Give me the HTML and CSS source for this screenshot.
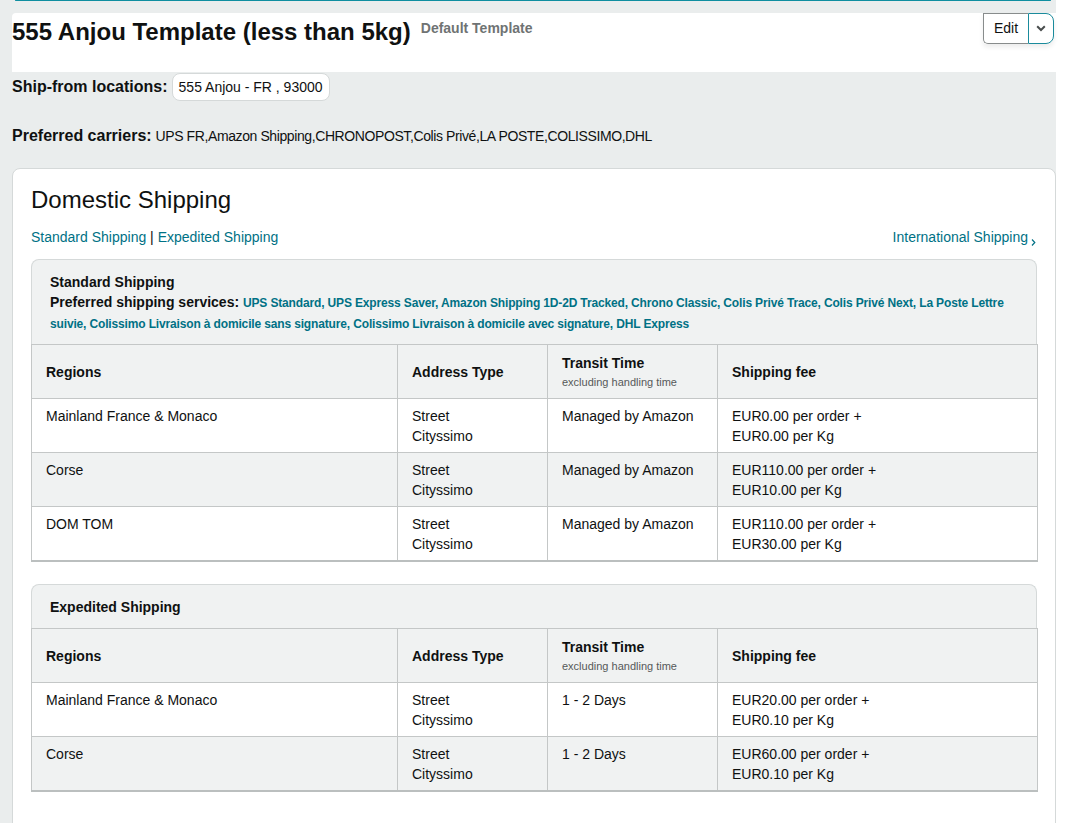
FILE: index.html
```html
<!DOCTYPE html>
<html lang="en">
<head>
<meta charset="utf-8">
<title>555 Anjou Template</title>
<link rel="stylesheet" href="styles.css">
</head>
<body>
<div class="page">
  <div class="topline"></div>
  <header class="head">
    <div class="title-wrap">
      <h1 class="title">555 Anjou Template (less than 5kg)</h1>
      <span class="default-tag">Default Template</span>
    </div>
    <div class="btn-group">
      <span class="btn-edit">Edit</span>
      <span class="btn-drop">
        <svg width="10" height="7" viewBox="0 0 10 7"><path d="M1.2 1.3 L5 5 L8.8 1.3" fill="none" stroke="#494d4d" stroke-width="2"/></svg>
      </span>
    </div>
  </header>

  <div class="shipfrom">
    <span class="label">Ship-from locations:</span>
    <span class="pill">555 Anjou - FR , 93000</span>
  </div>

  <div class="carriers">
    <span class="label">Preferred carriers:</span> <span class="carrier-list">UPS FR,Amazon Shipping,CHRONOPOST,Colis Privé,LA POSTE,COLISSIMO,DHL</span>
  </div>

  <section class="card">
    <h2 class="card-title">Domestic Shipping</h2>
    <div class="links">
      <div><a class="link">Standard Shipping</a> | <a class="link">Expedited Shipping</a></div>
      <a class="link">International Shipping<svg class="chev" width="5" height="8" viewBox="0 0 5 8"><path d="M1 1.5 L3.8 4.5 L1 7.5" fill="none" stroke="#007185" stroke-width="1.2"/></svg></a>
    </div>

    <div class="svc">
      <div class="svc-head">
        <div class="svc-name">Standard Shipping</div>
        <div class="svc-pref"><b>Preferred shipping services:</b> <span class="svc-list">UPS Standard, UPS Express Saver, Amazon Shipping 1D-2D Tracked, Chrono Classic, Colis Privé Trace, Colis Privé Next, La Poste Lettre suivie, Colissimo Livraison à domicile sans signature, Colissimo Livraison à domicile avec signature, DHL Express</span></div>
      </div>
      <table class="grid">
        <colgroup><col class="c1"><col class="c2"><col class="c3"><col class="c4"></colgroup>
        <thead>
          <tr><th>Regions</th><th>Address Type</th><th><span class="th-main">Transit Time</span><span class="th-sub">excluding handling time</span></th><th>Shipping fee</th></tr>
        </thead>
        <tbody>
          <tr><td>Mainland France &amp; Monaco</td><td>Street<br>Cityssimo</td><td>Managed by Amazon</td><td>EUR0.00 per order +<br>EUR0.00 per Kg</td></tr>
          <tr><td>Corse</td><td>Street<br>Cityssimo</td><td>Managed by Amazon</td><td>EUR110.00 per order +<br>EUR10.00 per Kg</td></tr>
          <tr><td>DOM TOM</td><td>Street<br>Cityssimo</td><td>Managed by Amazon</td><td>EUR110.00 per order +<br>EUR30.00 per Kg</td></tr>
        </tbody>
      </table>
    </div>

    <div class="svc svc-exp">
      <div class="svc-head">
        <div class="svc-name">Expedited Shipping</div>
      </div>
      <table class="grid">
        <colgroup><col class="c1"><col class="c2"><col class="c3"><col class="c4"></colgroup>
        <thead>
          <tr><th>Regions</th><th>Address Type</th><th><span class="th-main">Transit Time</span><span class="th-sub">excluding handling time</span></th><th>Shipping fee</th></tr>
        </thead>
        <tbody>
          <tr><td>Mainland France &amp; Monaco</td><td>Street<br>Cityssimo</td><td>1 - 2 Days</td><td>EUR20.00 per order +<br>EUR0.10 per Kg</td></tr>
          <tr><td>Corse</td><td>Street<br>Cityssimo</td><td>1 - 2 Days</td><td>EUR60.00 per order +<br>EUR0.10 per Kg</td></tr>
        </tbody>
      </table>
    </div>
  </section>
</div>
</body>
</html>
```

FILE: styles.css
```css
* { box-sizing: border-box; }
html, body { margin: 0; padding: 0; }
body {
  background: #ffffff;
  font-family: "Liberation Sans", Arial, sans-serif;
  color: #0f1111;
  font-size: 14px;
  line-height: 20px;
}
.page {
  width: 1056px;
  background: #eaeded;
  min-height: 823px;
  padding-bottom: 40px;
}
.topline {
  height: 1px;
  width: 1036px;
  margin-left: 15px;
  background: #0f8ea0;
  border-radius: 1px;
}
.head {
  margin: 12px 0 0 12px;
  height: 59px;
  background: #ffffff;
  border-top-left-radius: 4px;
  display: flex;
  justify-content: space-between;
  align-items: flex-start;
}
.title-wrap {
  display: flex;
  align-items: flex-start;
  padding-top: 4px;
}
.title {
  margin: 0;
  font-size: 24px;
  line-height: 30px;
  font-weight: 700;
  color: #0f1111;
}
.default-tag {
  margin-left: 10px;
  font-size: 14px;
  font-weight: 700;
  color: #6f7373;
  line-height: 20px;
  padding-top: 1px;
}
.btn-group {
  display: flex;
  height: 31px;
  margin-right: 2px;
  box-shadow: 0 3px 5px rgba(15, 17, 17, 0.08);
  border-radius: 0 8px 8px 4px;
}
.btn-edit {
  width: 45px;
  height: 31px;
  border: 1px solid #888c8c;
  border-right: none;
  border-radius: 0 0 0 5px;
  background: #fff;
  font-size: 14px;
  line-height: 29px;
  text-align: center;
  color: #0f1111;
}
.btn-drop {
  width: 26px;
  height: 31px;
  border: 1px solid #1a8b9c;
  border-radius: 0 8px 8px 0;
  background: #fff;
  display: flex;
  align-items: center;
  justify-content: center;
}
.label {
  font-size: 16px;
  font-weight: 700;
  color: #0f1111;
}
.shipfrom {
  margin-top: 1px;
  padding-left: 12px;
  display: flex;
  align-items: center;
  gap: 4px;
  height: 28px;
}
.pill {
  display: inline-block;
  height: 28px;
  line-height: 26px;
  padding: 0 6px;
  border: 1px solid #d5d9d9;
  border-radius: 8px;
  background: #fff;
  font-size: 14px;
}
.carriers {
  margin-top: 25px;
  padding-left: 12px;
  font-size: 14px;
  line-height: 20px;
}
.carrier-list {
  letter-spacing: -0.4px;
}
.card {
  margin: 22px 0 0 12px;
  width: 1044px;
  background: #fff;
  border: 1px solid #d5d9d9;
  border-radius: 8px;
  padding: 17px 18px 40px 18px;
}
.card-title {
  margin: 0;
  font-size: 24px;
  line-height: 28px;
  font-weight: 400;
  color: #0f1111;
}
.links {
  margin-top: 13px;
  display: flex;
  justify-content: space-between;
  font-size: 14px;
  line-height: 20px;
  color: #0f1111;
  padding-right: 1px;
}
.link {
  color: #007185;
  text-decoration: none;
}
.chev {
  margin-left: 3px;
  vertical-align: -4px;
}
.svc {
  margin-top: 12px;
  width: 1006px;
}
.svc-exp {
  margin-top: 22px;
}
.svc-head {
  background: #f0f2f2;
  border: 1px solid #d5d9d9;
  border-bottom: none;
  border-radius: 8px 8px 0 0;
  padding: 12px 14px 10px 18px;
}
.svc-exp .svc-head {
  padding-bottom: 11px;
}
.svc-name {
  font-weight: 700;
  font-size: 14px;
  line-height: 20px;
}
.svc-pref {
  font-size: 14px;
  line-height: 21px;
}
.svc-pref b { font-weight: 700; }
.svc-list {
  font-size: 12px;
  line-height: 14px;
  font-weight: 700;
  color: #007185;
  letter-spacing: -0.15px;
}
.grid {
  width: 100%;
  border-collapse: collapse;
  border: 1px solid #bbbfbf;
  border-bottom-width: 2px;
  table-layout: fixed;
}
.c1 { width: 366px; }
.c2 { width: 150px; }
.c3 { width: 170px; }
.c4 { width: 320px; }
.grid th, .grid td {
  border: 1px solid #c4c7c7;
  text-align: left;
  font-size: 14px;
  line-height: 20px;
  color: #0f1111;
}
.grid th {
  background: #f0f2f2;
  font-weight: 700;
  padding: 8px 14px 7px 14px;
  vertical-align: middle;
  height: 53px;
}
.th-main { display: block; }
.th-sub {
  display: block;
  font-size: 11px;
  line-height: 18px;
  font-weight: 400;
  color: #565959;
}
.grid td {
  padding: 7px 14px 6px 14px;
  vertical-align: top;
  background: #fff;
}
.grid tbody tr:nth-child(even) td {
  background: #f0f2f2;
}
```
